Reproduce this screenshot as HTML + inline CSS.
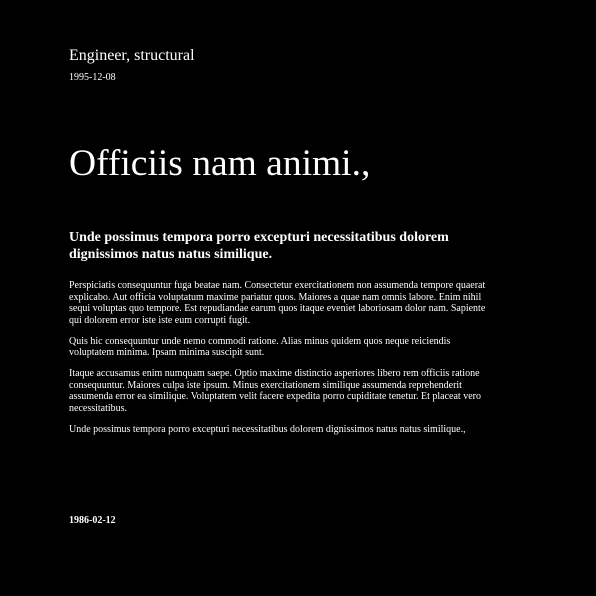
<!DOCTYPE html>
<html><head><style>
body{margin:0;background:#000;color:#fff;font-family:"Liberation Serif",serif;width:596px;height:596px;overflow:hidden;position:relative}
.a{position:absolute;left:69px;margin:0}
p.b{font-size:10px;line-height:11.5px;margin:0 0 9.5px 0;width:420px}
</style></head><body>
<div class="a" style="top:46px;font-size:16px;line-height:20px">Engineer, structural</div>
<div class="a" style="top:72px;font-size:10px;line-height:12px">1995-12-08</div>
<div class="a" style="top:143px;font-size:37.5px;line-height:42px">Officiis nam animi.,</div>
<div class="a" style="top:229px;font-size:14px;line-height:17px;font-weight:bold;width:420px">Unde possimus tempora porro excepturi necessitatibus dolorem dignissimos natus natus similique.</div>
<div class="a" style="top:280px">
<p class="b">Perspiciatis consequuntur fuga beatae nam. Consectetur exercitationem non assumenda tempore quaerat explicabo. Aut officia voluptatum maxime pariatur quos. Maiores a quae nam omnis labore. Enim nihil sequi voluptas quo tempore. Est repudiandae earum quos itaque eveniet laboriosam dolor nam. Sapiente qui dolorem error iste iste eum corrupti fugit.</p>
<p class="b">Quis hic consequuntur unde nemo commodi ratione. Alias minus quidem quos neque reiciendis voluptatem minima. Ipsam minima suscipit sunt.</p>
<p class="b">Itaque accusamus enim numquam saepe. Optio maxime distinctio asperiores libero rem officiis ratione consequuntur. Maiores culpa iste ipsum. Minus exercitationem similique assumenda reprehenderit assumenda error ea similique. Voluptatem velit facere expedita porro cupiditate tenetur. Et placeat vero necessitatibus.</p>
<p class="b">Unde possimus tempora porro excepturi necessitatibus dolorem dignissimos natus natus similique.,</p>
</div>
<div class="a" style="top:515px;font-size:10px;line-height:12px;font-weight:bold">1986-02-12</div>
</body></html>
